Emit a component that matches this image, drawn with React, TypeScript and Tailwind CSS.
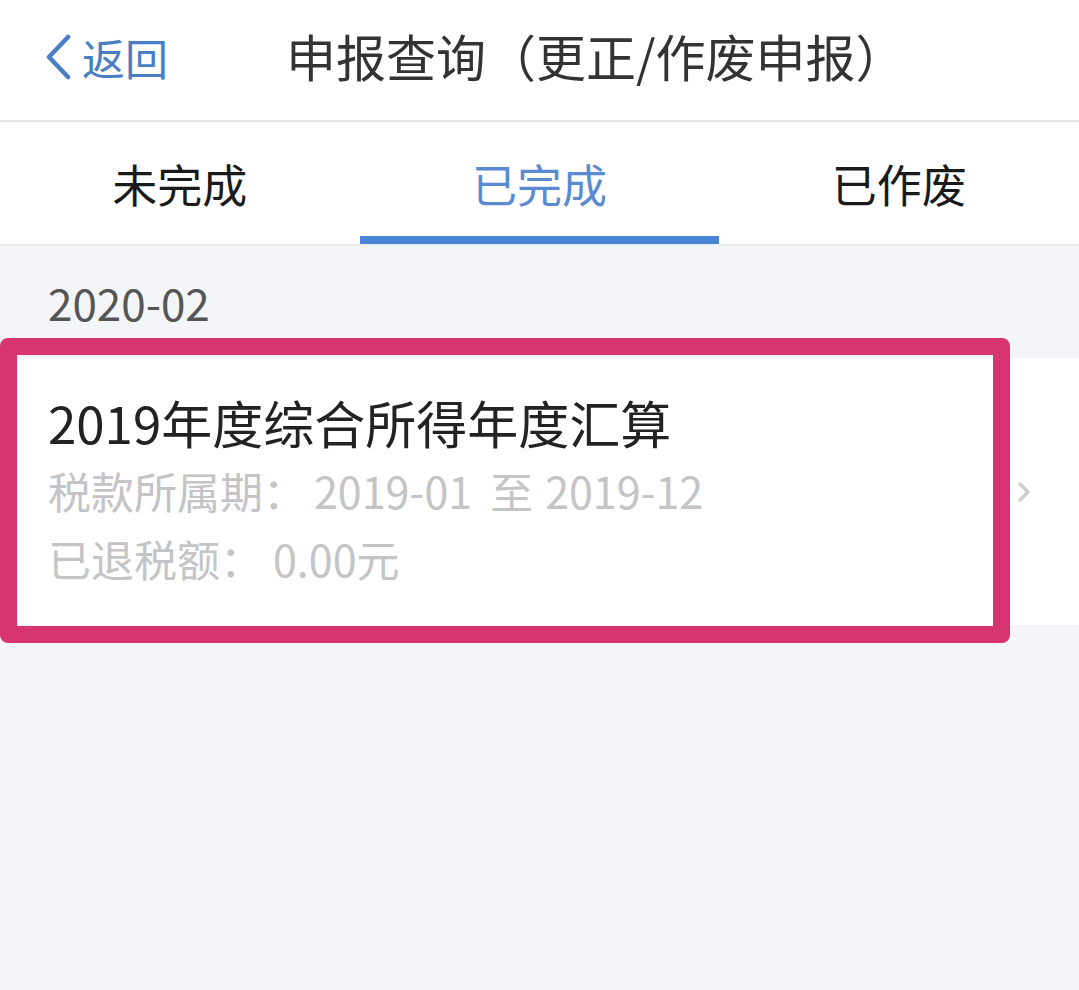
import React from "react";

const font = { fontFamily: '"Noto Sans CJK SC", "Noto Sans", sans-serif' };

function BackChevron() {
  return (
    <svg width="28" height="46" viewBox="0 0 28 46" fill="none">
      <path d="M24 3 L5 23 L24 43" stroke="#4a7ec4" strokeWidth="4.5" strokeLinecap="round" strokeLinejoin="round" />
    </svg>
  );
}

export default function App() {
  const tabs = ["未完成", "已完成", "已作废"];
  const active = 1;

  return (
    <div className="w-[1079px] h-[990px] overflow-hidden bg-[#f4f5f9]" style={font}>
      {/* header */}
      <div className="flex h-[122px] items-center bg-white border-b-2 border-[#e6e6e8] pb-[10px]">
        <div className="flex items-center pl-[44px] pt-[4px]">
          <BackChevron />
          <span className="ml-[10px] text-[43px] leading-none text-[#4a7ec4]">返回</span>
        </div>
        <h1 className="ml-[118px] text-[50px] leading-none text-[#333]">申报查询（更正/作废申报）</h1>
      </div>

      {/* tabs */}
      <div className="grid grid-cols-3 h-[124px] bg-white border-b-2 border-[#eceef2]">
        {tabs.map((t, i) => (
          <div key={t} className="relative flex items-center justify-center">
            <span className={`text-[45px] leading-none ${i === active ? "text-[#5a8bd2]" : "text-[#1a1a1a]"}`}>{t}</span>
            {i === active && <div className="absolute bottom-0 left-0 right-0 h-[8px] bg-[#4a84d8]" />}
          </div>
        ))}
      </div>

      {/* date group */}
      <div className="flex h-[112px] items-center pl-[48px]">
        <span className="text-[44px] leading-none text-[#555]">2020-02</span>
      </div>

      {/* record card */}
      <div className="relative flex items-center bg-white h-[267px]">
        <div className="flex-1 pl-[48px] pb-[4px]">
          <div className="text-[51px] leading-[68px] text-[#222]">2019年度综合所得年度汇算</div>
          <div className="text-[43px] leading-[68px] text-[#c4c4c6]">
            税款所属期：<span className="ml-[8px]">2019-01</span>
            <span className="ml-[18px] mr-[12px]">至</span>2019-12
          </div>
          <div className="text-[43px] leading-[68px] text-[#c4c4c6]">
            已退税额：<span className="ml-[10px]">0.00元</span>
          </div>
        </div>
        <svg className="mr-[48px]" width="14" height="22" viewBox="0 0 14 22" fill="none">
          <path d="M3 3 L11 11 L3 19" stroke="#cdcdcf" strokeWidth="3.5" strokeLinecap="round" strokeLinejoin="round" />
        </svg>
        {/* highlight annotation */}
        <div className="absolute left-0 top-[-20px] w-[1010px] h-[305px] rounded-[8px] border-[17px] border-[#d93472]" />
      </div>
    </div>
  );
}
